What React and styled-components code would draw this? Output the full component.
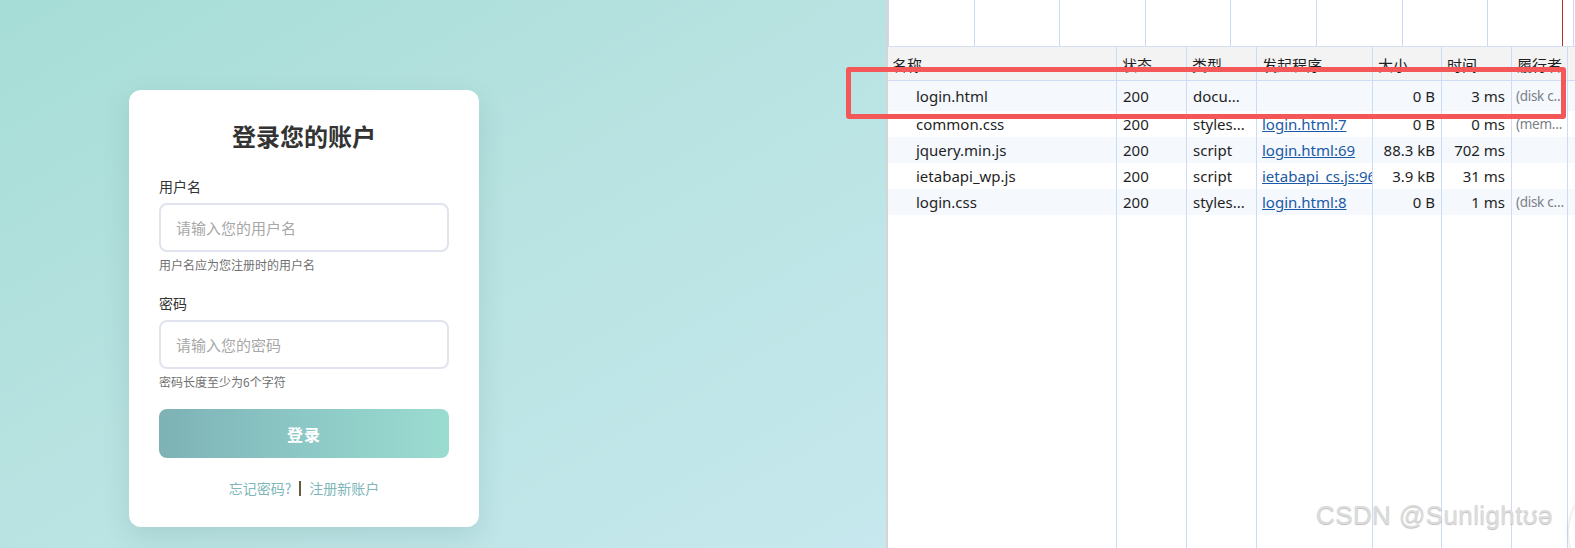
import React from "react";
import styled, { createGlobalStyle } from "styled-components";

const GlobalStyle = createGlobalStyle`
  html, body {
    margin: 0;
    padding: 0;
  }
  body {
    width: 1575px;
    height: 548px;
    overflow: hidden;
    font-family: "Noto Sans", "Noto Sans CJK SC", sans-serif;
  }
`;

const Page = styled.div`
  position: relative;
  display: flex;
  width: 1575px;
  height: 548px;
  overflow: hidden;
`;

const LoginArea = styled.div`
  width: 886px;
  flex-shrink: 0;
  box-sizing: border-box;
  padding: 90px 0 0 129px;
  background: linear-gradient(150deg, #a6ddd6 0%, #b9e3e2 50%, #c6e8ee 100%);
`;

const Card = styled.div`
  width: 350px;
  box-sizing: border-box;
  padding: 30px 30px 29px;
  background: #fff;
  border-radius: 12px;
  box-shadow: 0 10px 28px rgba(40, 90, 90, 0.14);
  font-family: "Noto Sans CJK SC", "Noto Sans", sans-serif;
`;

const Title = styled.h2`
  margin: 0 0 24px;
  height: 32px;
  line-height: 32px;
  text-align: center;
  font-size: 24px;
  font-weight: 700;
  color: #333;
`;

const Label = styled.label`
  display: block;
  height: 20px;
  line-height: 20px;
  font-size: 14px;
  color: #333;
  margin: ${(p) => (p.$first ? "0" : "20px")} 0 7px;
`;

const Input = styled.input`
  display: block;
  width: 100%;
  height: 49px;
  box-sizing: border-box;
  padding: 0 15px;
  border: 2px solid #e1e4ef;
  border-radius: 8px;
  font-family: inherit;
  font-size: 15px;
  color: #333;
  outline: none;

  &::placeholder {
    color: #a8a8a8;
  }
`;

const Hint = styled.div`
  margin-top: 5px;
  height: 16px;
  line-height: 16px;
  font-size: 12px;
  color: #707070;
`;

const SubmitButton = styled.button`
  display: block;
  width: 100%;
  height: 49px;
  margin-top: 19px;
  border: none;
  border-radius: 8px;
  background: linear-gradient(90deg, #7eb2b5 0%, #8cc8c6 50%, #9bdcd0 100%);
  color: #fff;
  font-family: inherit;
  font-size: 16px;
  font-weight: 700;
  letter-spacing: 1px;
`;

const LinkRow = styled.div`
  display: flex;
  justify-content: center;
  align-items: center;
  gap: 8px;
  margin-top: 20px;
  height: 20px;
  font-size: 14px;
`;

const TextLink = styled.a`
  color: #80b6b9;
  text-decoration: none;
`;

const Divider = styled.span`
  width: 2px;
  height: 15px;
  background: #6b5a3c;
`;

const DevTools = styled.div`
  flex: 1;
  display: flex;
  flex-direction: column;
  border-left: 2px solid #d5d5d5;
  background: #fff;
  font-family: "Noto Sans", "Noto Sans CJK SC", sans-serif;
  font-size: 15px;
  color: #1f1f1f;
`;

const Overview = styled.div`
  position: relative;
  display: flex;
  height: 47px;
  flex-shrink: 0;
  border-bottom: 1px solid #d3def3;
  box-sizing: border-box;
  overflow: hidden;
`;

const Tick = styled.div`
  width: 85.6px;
  flex-shrink: 0;
  border-left: 1px solid #c9d8f4;
  box-sizing: border-box;
`;

const Marker = styled.div`
  position: absolute;
  left: 674px;
  top: 0;
  bottom: 0;
  width: 1px;
  background: #a8312c;
`;

const columns = "229px 70px 70px 116px 69px 70px 56px 1fr";

const Row = styled.div`
  display: grid;
  grid-template-columns: ${columns};
  height: ${(p) => p.$h || 26}px;
  background: ${(p) => p.$bg || "#fff"};
  flex-shrink: 0;
`;

const HeaderRow = styled(Row)`
  height: 34px;
  background: #f3f3f3;
  border-bottom: 1px solid #cfdcf4;
  box-sizing: border-box;
`;

const Filler = styled(Row)`
  flex: 1;
  height: auto;
`;

const Cell = styled.div`
  display: flex;
  align-items: center;
  justify-content: ${(p) => (p.$right ? "flex-end" : "flex-start")};
  padding: 0 ${(p) => (p.$right ? "6px" : "0")} 0 ${(p) => p.$pl ?? 6}px;
  border-right: 1px solid #cddbf5;
  white-space: nowrap;
  overflow: hidden;
  min-width: 0;
`;

const MutedCell = styled(Cell)`
  color: #7a7f86;
  font-size: 13.5px;
  letter-spacing: -0.3px;
`;

const HeadCell = styled(Cell)`
  padding-top: 2px;
`;

const Initiator = styled.a`
  color: #1a5aa6;
  text-decoration: underline;
`;

const Highlight = styled.div`
  position: absolute;
  left: 846px;
  top: 67px;
  width: 720px;
  height: 52px;
  box-sizing: border-box;
  border: 5px solid #f35757;
  border-radius: 3px;
  pointer-events: none;
`;

const Watermark = styled.div`
  position: absolute;
  left: 1316px;
  top: 500px;
  font-family: "Liberation Sans", Arial, sans-serif;
  font-size: 26px;
  letter-spacing: 0.4px;
  color: #dcdcdc;
  text-shadow: 0 1px 1px rgba(0, 0, 0, 0.25);
  white-space: nowrap;
`;

const FloatEdge = styled.div`
  position: absolute;
  left: 1569px;
  top: 488px;
  width: 70px;
  height: 90px;
  border-radius: 50%;
  background: #fff;
  box-shadow: 0 0 4px rgba(0, 0, 0, 0.18);
`;

const headers = ["名称", "状态", "类型", "发起程序", "大小", "时间", "履行者", ""];

const requests = [
  { name: "login.html", status: "200", type: "docu...", init: "", size: "0 B", time: "3 ms", by: "(disk c…" },
  { name: "common.css", status: "200", type: "styles...", init: "login.html:7", size: "0 B", time: "0 ms", by: "(mem…" },
  { name: "jquery.min.js", status: "200", type: "script", init: "login.html:69", size: "88.3 kB", time: "702 ms", by: "" },
  { name: "ietabapi_wp.js", status: "200", type: "script", init: "ietabapi_cs.js:96", size: "3.9 kB", time: "31 ms", by: "" },
  { name: "login.css", status: "200", type: "styles...", init: "login.html:8", size: "0 B", time: "1 ms", by: "(disk c…" },
];

const App = () => {
  return (
    <Page>
      <GlobalStyle />
      <LoginArea>
        <Card>
          <Title>登录您的账户</Title>
          <Label $first>用户名</Label>
          <Input placeholder="请输入您的用户名" />
          <Hint>用户名应为您注册时的用户名</Hint>
          <Label>密码</Label>
          <Input type="password" placeholder="请输入您的密码" />
          <Hint>密码长度至少为6个字符</Hint>
          <SubmitButton>登录</SubmitButton>
          <LinkRow>
            <TextLink href="#">忘记密码?</TextLink>
            <Divider />
            <TextLink href="#">注册新账户</TextLink>
          </LinkRow>
        </Card>
      </LoginArea>

      <DevTools>
        <Overview>
          {Array.from({ length: 9 }).map((_, i) => (
            <Tick key={i} />
          ))}
          <Marker />
        </Overview>
        <HeaderRow>
          {headers.map((h, i) => (
            <HeadCell key={i} $pl={i === 0 ? 4 : 5}>
              {h}
            </HeadCell>
          ))}
        </HeaderRow>
        {requests.map((r, i) => (
          <Row key={r.name} $h={i === 0 ? 30 : 26} $bg={i % 2 === 0 ? "#f5f8fd" : "#fff"}>
            <Cell $pl={28}>{r.name}</Cell>
            <Cell>{r.status}</Cell>
            <Cell>{r.type}</Cell>
            <Cell $pl={5}>{r.init && <Initiator>{r.init}</Initiator>}</Cell>
            <Cell $right $pl={0}>{r.size}</Cell>
            <Cell $right $pl={0}>{r.time}</Cell>
            <MutedCell $pl={4}>{r.by}</MutedCell>
            <Cell />
          </Row>
        ))}
        <Filler>
          {headers.map((_, i) => (
            <Cell key={i} />
          ))}
        </Filler>
      </DevTools>

      <Highlight />
      <Watermark>CSDN @Sunlightʊə</Watermark>
      <FloatEdge />
    </Page>
  );
};

export default App;
